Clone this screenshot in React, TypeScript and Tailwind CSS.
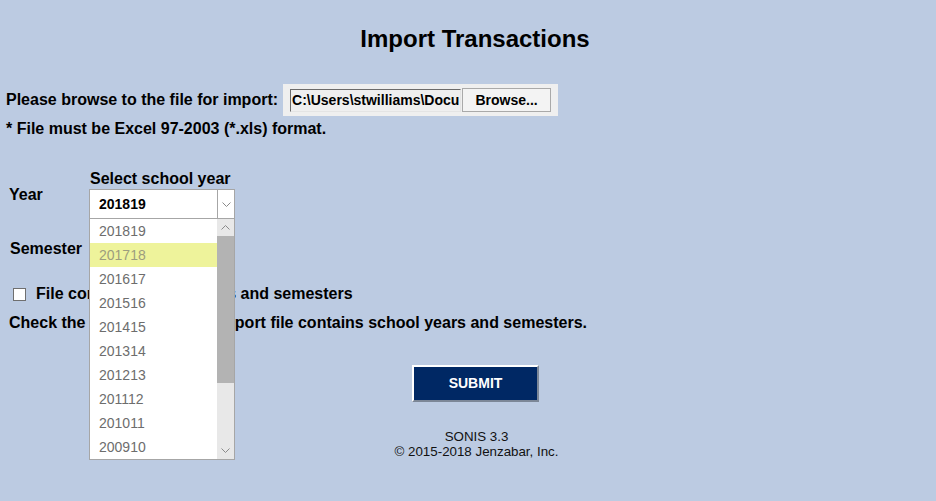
import React from "react";

const years = ["201819","201718","201617","201516","201415","201314","201213","201112","201011","200910"];

function ChevDown({ className }: { className?: string }) {
  return (
    <svg width="9" height="5" viewBox="0 0 9 5" className={className}>
      <path d="M0.5 0.5 L4.5 4.5 L8.5 0.5" fill="none" stroke="#8a8a8a" strokeWidth="1" />
    </svg>
  );
}
function ChevUp({ className }: { className?: string }) {
  return (
    <svg width="9" height="5" viewBox="0 0 9 5" className={className}>
      <path d="M0.5 4.5 L4.5 0.5 L8.5 4.5" fill="none" stroke="#8a8a8a" strokeWidth="1" />
    </svg>
  );
}

export default function App() {
  return (
    <div className="relative w-[936px] h-[501px] overflow-hidden bg-[#bccbe2] text-black font-['Liberation_Sans',Arial,sans-serif]">
      <h1 className="pl-[14px] pt-[25px] text-center text-[24px] leading-[28px] font-bold">Import Transactions</h1>

      <div className="mt-[31px] flex items-center pl-[6px]">
        <span className="text-[16px] leading-[18px] font-bold">Please browse to the file for import:</span>
        <div className="ml-[5px] flex h-[32px] w-[275px] items-center bg-[#efefef] pl-[7px]">
          <div className="h-[23px] w-[171px] overflow-hidden whitespace-nowrap border-t border-l border-t-[#6b6b6b] border-l-[#6b6b6b] border-b border-r border-b-[#e4e4e4] border-r-[#e4e4e4] bg-[#efefef] pl-[1px] text-[14px] leading-[21px] font-bold">
            C:\Users\stwilliams\Docu
          </div>
          <div className="ml-[1px] flex h-[24px] w-[89px] items-center justify-center border border-[#a9a9a9] bg-[#f3f3f3] text-[14px] font-bold">
            Browse...
          </div>
        </div>
      </div>

      <div className="mt-[4px] pl-[6px] text-[16px] leading-[18px] font-bold">* File must be Excel 97-2003 (*.xls) format.</div>

      <div className="mt-[32px] flex">
        <div className="flex w-[89px] items-center pl-[9px] text-[16px] leading-[18px] font-bold">Year</div>
        <div className="flex flex-col">
          <div className="pl-[1px] text-[16px] leading-[18px] font-bold">Select school year</div>
          <div className="mt-[1px] flex h-[30px] w-[146px] border border-[#a6a6a6] bg-white">
            <div className="flex flex-1 items-center pl-[9px] text-[14px] font-bold">201819</div>
            <div className="flex w-[17px] items-center justify-center border-l border-[#a6a6a6]">
              <ChevDown />
            </div>
          </div>
        </div>
      </div>

      <div className="mt-[21px] pl-[10px] text-[16px] leading-[18px] font-bold">Semester</div>

      <div className="mt-[27px] flex items-center pl-[13px]">
        <div className="h-[13px] w-[13px] border border-[#6f6f6f] bg-white" />
        <span className="ml-[10px] text-[16px] leading-[18px] font-bold">File contains school years and semesters</span>
      </div>

      <div className="mt-[11px] pl-[9px] text-[16px] leading-[18px] font-bold">
        Check the box if this Excel import file contains school years and semesters.
      </div>

      <div className="mt-[33px] flex justify-center pl-[15px]">
        <div className="flex h-[37px] w-[127px] items-center justify-center border-t-2 border-l-2 border-t-white border-l-white border-b-2 border-r-2 border-b-[#7c8797] border-r-[#7c8797] bg-[#002864] text-[14px] font-bold text-white">
          SUBMIT
        </div>
      </div>

      <div className="mt-[27px] pl-[17px] text-center text-[13.33px] leading-[15px] text-[#111]">
        <div>SONIS 3.3</div>
        <div>© 2015-2018 Jenzabar, Inc.</div>
      </div>

      {/* open dropdown list overlay */}
      <div className="absolute left-[89px] top-[218px] flex h-[242px] w-[146px] border border-[#a6a6a6] bg-white">
        <div className="flex-1">
          {years.map((y, i) => (
            <div
              key={y}
              className={
                i === 1
                  ? "flex h-[24px] items-center bg-[#eef39b] pl-[9px] text-[14px] text-[#9d9d7e]"
                  : "flex h-[24px] items-center pl-[9px] text-[14px] text-[#6d6d6d]"
              }
            >
              {y}
            </div>
          ))}
        </div>
        <div className="flex w-[17px] flex-col bg-[#e8e8e8]">
          <div className="flex h-[17px] items-center justify-center">
            <ChevUp />
          </div>
          <div className="h-[147px] bg-[#b3b3b3]" />
          <div className="flex-1" />
          <div className="flex h-[17px] items-center justify-center">
            <ChevDown />
          </div>
        </div>
      </div>
    </div>
  );
}
